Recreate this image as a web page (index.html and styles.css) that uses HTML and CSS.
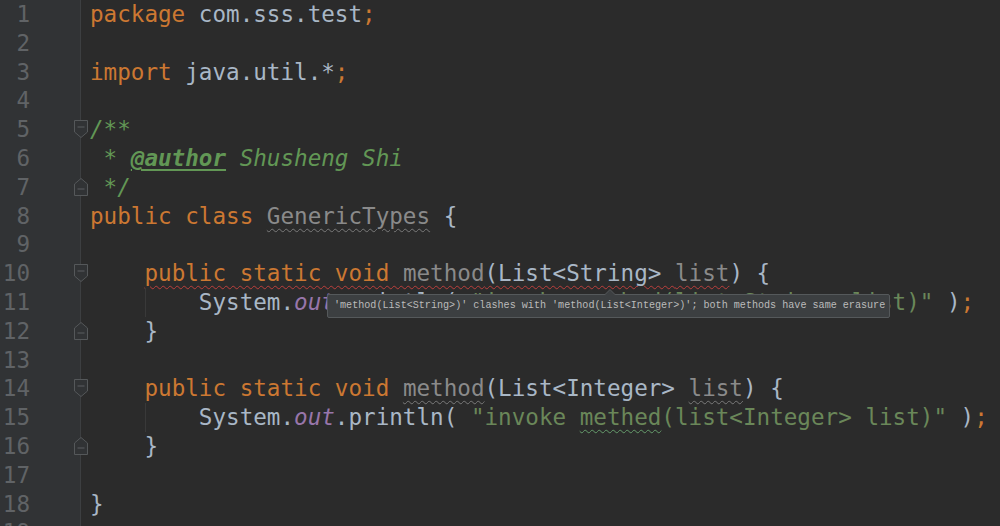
FILE: index.html
```html
<!DOCTYPE html>
<html>
<head>
<meta charset="utf-8">
<link rel="stylesheet" href="styles.css">
</head>
<body>
<div class="editor">
  <div class="row"><div class="gutter">1</div><div class="code"><span class="kw">package</span> com.sss.test<span class="kw">;</span></div></div>
  <div class="row"><div class="gutter">2</div><div class="code"></div></div>
  <div class="row"><div class="gutter">3</div><div class="code"><span class="kw">import</span> java.util.*<span class="kw">;</span></div></div>
  <div class="row"><div class="gutter">4</div><div class="code"></div></div>
  <div class="row"><div class="gutter">5<svg class="fold" viewBox="0 0 14 18"><path d="M0.5 0.5H13.5V12L7 17.5L0.5 12Z"/><line x1="3.5" y1="7" x2="10.5" y2="7"/></svg></div><div class="code"><span class="doc">/**</span></div></div>
  <div class="row"><div class="gutter">6</div><div class="code"><span class="doc"> * <span class="tag">@author</span> <i>Shusheng Shi</i></span></div></div>
  <div class="row"><div class="gutter">7<svg class="fold up" viewBox="0 0 14 18"><path d="M0.5 17.5H13.5V6L7 0.5L0.5 6Z"/><line x1="3.5" y1="11" x2="10.5" y2="11"/></svg></div><div class="code"><span class="doc"> */</span></div></div>
  <div class="row"><div class="gutter">8</div><div class="code"><span class="kw">public class</span> <span class="unused wv">GenericTypes</span> {</div></div>
  <div class="row"><div class="gutter">9</div><div class="code"></div></div>
  <div class="row"><div class="gutter">10<svg class="fold" viewBox="0 0 14 18"><path d="M0.5 0.5H13.5V12L7 17.5L0.5 12Z"/><line x1="3.5" y1="7" x2="10.5" y2="7"/></svg></div><div class="code">    <span class="err"><span class="kw">public static void</span> <span class="unused">method</span>(List&lt;String&gt; <span class="unused">list</span></span>) {</div></div>
  <div class="row guide"><div class="gutter">11</div><div class="code">        System.<span class="field">out</span>.println( <span class="str">"invoke method(list&lt;String&gt; list)"</span> )<span class="kw">;</span></div></div>
  <div class="row"><div class="gutter">12<svg class="fold up" viewBox="0 0 14 18"><path d="M0.5 17.5H13.5V6L7 0.5L0.5 6Z"/><line x1="3.5" y1="11" x2="10.5" y2="11"/></svg></div><div class="code">    }</div></div>
  <div class="row"><div class="gutter">13</div><div class="code"></div></div>
  <div class="row"><div class="gutter">14<svg class="fold" viewBox="0 0 14 18"><path d="M0.5 0.5H13.5V12L7 17.5L0.5 12Z"/><line x1="3.5" y1="7" x2="10.5" y2="7"/></svg></div><div class="code">    <span class="kw">public static void</span> <span class="unused wv">method</span>(List&lt;Integer&gt; <span class="unused wv">list</span>) {</div></div>
  <div class="row guide"><div class="gutter">15</div><div class="code">        System.<span class="field">out</span>.println( <span class="str">"invoke <span class="typo">methed</span>(list&lt;Integer&gt; list)"</span> )<span class="kw">;</span></div></div>
  <div class="row"><div class="gutter">16<svg class="fold up" viewBox="0 0 14 18"><path d="M0.5 17.5H13.5V6L7 0.5L0.5 6Z"/><line x1="3.5" y1="11" x2="10.5" y2="11"/></svg></div><div class="code">    }</div></div>
  <div class="row"><div class="gutter">17</div><div class="code"></div></div>
  <div class="row"><div class="gutter">18</div><div class="code">}</div></div>
  <div class="row"><div class="gutter">19</div><div class="code"></div></div>

  <div class="tooltip">'method(List&lt;String&gt;)' clashes with 'method(List&lt;Integer&gt;)'; both methods have same erasure</div>
</div>
</body>
</html>
```
FILE: styles.css
```css
html, body {
  margin: 0;
  padding: 0;
  background: #2b2b2b;
}

.editor {
  position: relative;
  width: 1000px;
  height: 526px;
  overflow: hidden;
  font-family: "DejaVu Sans Mono", monospace;
  font-size: 22.6px;
  background: #2b2b2b;
}

.row {
  display: flex;
  height: 28.8px;
  line-height: 28.8px;
}

.gutter {
  position: relative;
  width: 81px;
  flex: none;
  box-sizing: border-box;
  padding-right: 50px;
  text-align: right;
  background: #313335;
  border-right: 1px solid #3d3f41;
  color: #606366;
}

.code {
  flex: 1;
  padding-left: 9px;
  white-space: pre;
  color: #a9b7c6;
}

.guide .code {
  background: linear-gradient(#393939, #393939) no-repeat 64px 0 / 1px 100%;
}

.fold {
  position: absolute;
  left: 74px;
  top: 5px;
  width: 14px;
  height: 18px;
}
.fold path {
  fill: #313335;
  stroke: #55585a;
  stroke-width: 1;
}
.fold line {
  stroke: #55585a;
  stroke-width: 1.2;
}

.kw { color: #cc7832; }
.str { color: #6a8759; }
.doc { color: #629755; font-style: italic; }
.doc i { font-style: italic; }
.tag {
  font-weight: bold;
  text-decoration: underline;
  text-underline-offset: 3px;
}
.field { color: #9876aa; font-style: italic; }
.unused { color: #8a8a8a; }

.wv {
  text-decoration: underline wavy #7a7a7a;
  text-decoration-thickness: 1.3px;
  text-underline-offset: 4px;
}
.err {
  text-decoration: underline wavy #bc3f3c;
  text-decoration-thickness: 1.4px;
  text-underline-offset: 4px;
}
.typo {
  text-decoration: underline wavy #659c6b;
  text-decoration-thickness: 1.3px;
  text-underline-offset: 4px;
}

.tooltip {
  position: absolute;
  left: 327px;
  top: 294px;
  width: 563px;
  height: 24px;
  box-sizing: border-box;
  padding-left: 6px;
  background: #3c3f41;
  border: 1px solid #55595b;
  border-radius: 2px;
  font-family: "Liberation Mono", monospace;
  font-size: 10.1px;
  line-height: 22px;
  color: #bbbbbb;
  white-space: pre;
}
.tooltip::before {
  content: "";
  position: absolute;
  left: 276px;
  top: -6px;
  border-left: 6px solid transparent;
  border-right: 6px solid transparent;
  border-bottom: 6px solid #55595b;
}
.tooltip::after {
  content: "";
  position: absolute;
  left: 277px;
  top: -5px;
  border-left: 5px solid transparent;
  border-right: 5px solid transparent;
  border-bottom: 5px solid #3c3f41;
}
```
